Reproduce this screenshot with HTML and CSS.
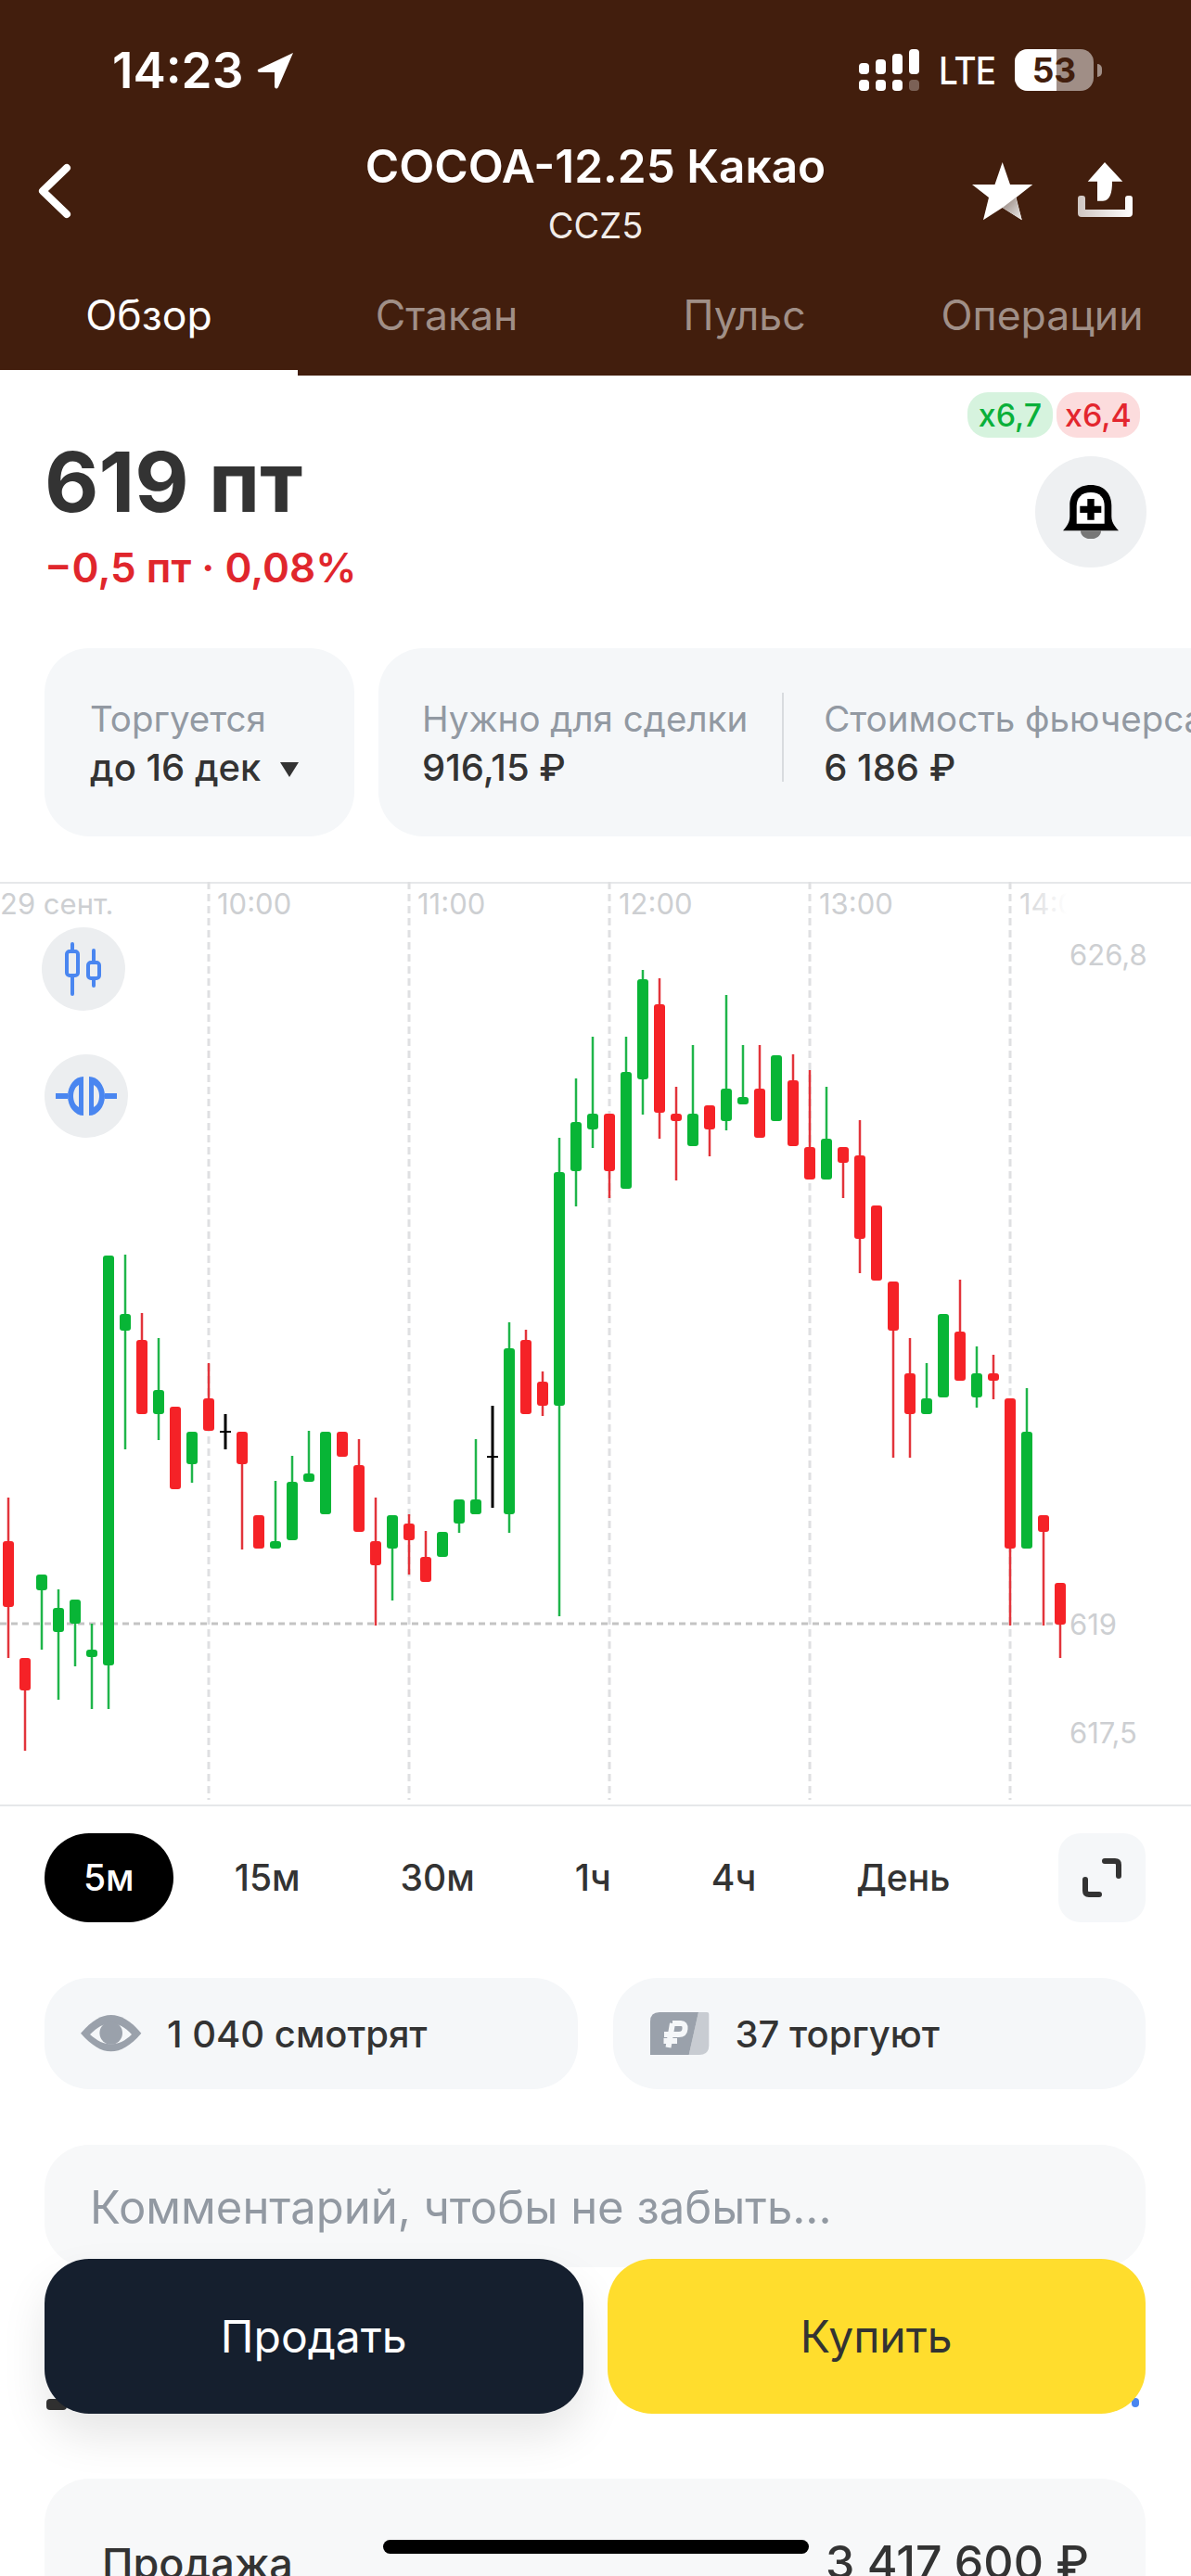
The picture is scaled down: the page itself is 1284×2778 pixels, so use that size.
FILE: index.html
```html
<!DOCTYPE html>
<html lang="ru">
<head>
  <meta charset="UTF-8">
  <title>COCOA-12.25 Какао</title>
  <link rel="stylesheet" href="styles.css">
</head>
<body>
<div class="screen">

  <header class="top">
    <div class="status">
      <div class="status-left">
        <span class="time">14:23</span>
        <svg class="arrow" viewBox="0 0 40 40"><path d="M39 1 L1 19 Q0 22 3 22 L19 22 L19 38 Q21 41 23 38 Z" fill="#fff"/></svg>
      </div>
      <div class="status-right">
        <svg class="signal" viewBox="0 0 66 45">
          <g fill="#fff">
            <rect x="0" y="15" width="11" height="12" rx="4"/>
            <rect x="18" y="11" width="11" height="16" rx="4"/>
            <rect x="36" y="5" width="11" height="22" rx="4"/>
            <rect x="54" y="0" width="11" height="27" rx="4"/>
            <rect x="0" y="33" width="11" height="12" rx="4"/>
            <rect x="18" y="33" width="11" height="12" rx="4"/>
            <rect x="36" y="33" width="11" height="12" rx="4"/>
            <rect x="54" y="33" width="11" height="12" rx="4" opacity=".3"/>
          </g>
        </svg>
        <span class="lte">LTE</span>
        <div class="battery"><div class="battery-fill"></div><span class="battery-num">53</span></div>
        <div class="battery-nub"></div>
      </div>
    </div>

    <div class="nav">
      <svg class="back" viewBox="0 0 40 64"><path d="M31 7 L5 32 L31 57" fill="none" stroke="#fff" stroke-width="8" stroke-linecap="round" stroke-linejoin="round"/></svg>
      <div class="nav-title">
        <div class="title">COCOA-12.25 Какао</div>
        <div class="ticker">CCZ5</div>
      </div>
      <div class="nav-icons">
        <svg class="star" viewBox="0 0 66 63">
          <defs>
            <linearGradient id="star-shade" x1="0" y1="0" x2="1" y2="1">
              <stop offset="0" stop-color="#8f7f78"/>
              <stop offset="1" stop-color="#f0eeed"/>
            </linearGradient>
          </defs>
          <path d="M32.700 0 L41 24 L65.300 24 L47.500 38 L53.700 62.300 L32.700 49 L12 62.300 L18 38 L0 24 L24.500 24 Z" fill="#fff"/>
          <path d="M32.700 49 L47 38 L53.700 62.300 Z" fill="url(#star-shade)"/>
        </svg>
        <svg class="share" viewBox="0 0 60 60">
          <defs>
            <linearGradient id="tray-shade" x1="0" y1="0" x2="1" y2="0">
              <stop offset="0" stop-color="#cfc6c2"/>
              <stop offset="1" stop-color="#fff"/>
            </linearGradient>
          </defs>
          <path d="M29 0 L48.300 20.700 L37 20.700 C37 33 35 41 27 41.700 L21 41.700 L21 20.700 L10.700 20.700 Z" fill="#fff"/>
          <path d="M3 36 H5 Q8 36 8 39 V51 H51 V39 Q51 36 54 36 H56 Q59 36 59 39 V55 Q59 59 55 59 H4 Q0 59 0 55 V39 Q0 36 3 36 Z" fill="url(#tray-shade)"/>
        </svg>
      </div>
    </div>

    <nav class="tabs">
      <div class="tab tab-active">Обзор</div>
      <div class="tab">Стакан</div>
      <div class="tab">Пульс</div>
      <div class="tab">Операции</div>
    </nav>
  </header>

  <section class="price">
    <div class="price-left">
      <div class="price-value">619 пт</div>
      <div class="price-change">−0,5 пт · 0,08%</div>
    </div>
    <div class="price-right">
      <div class="badges">
        <span class="badge badge-green">x6,7</span>
        <span class="badge badge-red">x6,4</span>
      </div>
      <div class="bell-btn">
        <svg class="bell" viewBox="0 0 60 58">
          <path d="M30 0 C16 0 7.300 9 7.300 22 V34 C7.300 41 3 46 0 49.300 H60 C57 46 52.300 41 52.300 34 V22 C52.300 9 44 0 30 0 Z" fill="#000"/>
          <path d="M30 8 C20 8 14.700 14 14.700 23 V41.700 H44.700 V23 C44.700 14 40 8 30 8 Z" fill="#fff"/>
          <path d="M26.300 15 H33.700 V22.700 H41.300 V30 H33.700 V37.700 H26.300 V30 H18.300 V22.700 H26.300 Z" fill="#000"/>
          <path d="M19 49.300 H41 C41 55 36 58.300 30 58.300 C24 58.300 19 55 19 49.300 Z" fill="#777"/>
        </svg>
      </div>
    </div>
  </section>

  <section class="info">
    <div class="info-card info-card-short">
      <div class="info-label">Торгуется</div>
      <div class="info-value">до 16 дек <span class="caret"></span></div>
    </div>
    <div class="info-card info-card-long">
      <div class="info-col">
        <div class="info-label">Нужно для сделки</div>
        <div class="info-value">916,15 ₽</div>
      </div>
      <div class="info-sep"></div>
      <div class="info-col">
        <div class="info-label">Стоимость фьючерса</div>
        <div class="info-value">6 186 ₽</div>
      </div>
    </div>
  </section>

  <section class="chart">
    <svg id="chart-svg" class="chart-svg" viewBox="0 951 1284 996" width="1284" height="996">
      <defs>
        <linearGradient id="fade" x1="1099" x2="1150" y1="0" y2="0" gradientUnits="userSpaceOnUse">
          <stop offset="0" stop-color="#cdcfd2"/>
          <stop offset="1" stop-color="#cdcfd2" stop-opacity="0"/>
        </linearGradient>
      </defs>
      <g class="chart-axis">
        <text x="0" y="986">29 сент.</text>
        <text x="234" y="986">10:00</text>
        <text x="450" y="986">11:00</text>
        <text x="667" y="986">12:00</text>
        <text x="883" y="986">13:00</text>
        <text x="1099" y="986" class="axis-fade">14:00</text>
        <text x="1153" y="1041">626,8</text>
        <text x="1153" y="1763">619</text>
        <text x="1153" y="1880">617,5</text>
      </g>
    </svg>
    <div class="chart-btn chart-btn-candles">
      <svg viewBox="0 0 44 58" class="chart-icon">
        <g fill="none" stroke="#4a86f0" stroke-width="4" stroke-linecap="round">
          <path d="M10 2 V10 M10 36 V56"/>
          <rect x="4" y="10" width="12" height="26" rx="3"/>
          <path d="M33 9 V22 M33 39 V47"/>
          <rect x="27" y="22" width="12" height="17" rx="3"/>
        </g>
      </svg>
    </div>
    <div class="chart-btn chart-btn-split">
      <svg viewBox="0 0 66 42" class="chart-icon-wide">
        <g fill="#4a86f0">
          <rect x="0" y="18" width="13" height="6"/>
          <rect x="53" y="18" width="13" height="6"/>
          <path d="M30 0 A17 21 0 0 0 30 42 Z M25 9 V33 C21 31 19 26 19 21 C19 16 21 11 25 9 Z" fill-rule="evenodd"/>
          <path d="M36 0 A17 21 0 0 1 36 42 Z M41 9 V33 C45 31 47 26 47 21 C47 16 45 11 41 9 Z" fill-rule="evenodd"/>
        </g>
      </svg>
    </div>
  </section>

  <section class="periods">
    <div class="period period-active">5м</div>
    <div class="period">15м</div>
    <div class="period">30м</div>
    <div class="period">1ч</div>
    <div class="period">4ч</div>
    <div class="period">День</div>
    <div class="expand">
      <svg viewBox="0 0 44 44" class="expand-icon">
        <path d="M25 4 H36 Q40 4 40 8 V20 M4 24 V36 Q4 40 8 40 H19" fill="none" stroke="#333" stroke-width="6" stroke-linecap="round"/>
      </svg>
    </div>
  </section>

  <section class="stats">
    <div class="stat">
      <svg class="stat-icon" viewBox="0 0 66 46">
        <g transform="translate(0 3)">
          <path d="M0 19.700 C12 6 22 0 32.700 0 C43 0 54 6 65.300 19.700 C54 33 43 39.300 32.700 39.300 C22 39.300 12 33 0 19.700 Z" fill="#9aa1ab"/>
          <path d="M10 21 C18 13 25 9 32.700 9 C40 9 48 13 55 21 C48 28 40 31.500 32.700 31.500 C25 31.500 18 28 10 21 Z" fill="#f5f7f9"/>
          <circle cx="32.700" cy="19.500" r="12.300" fill="#9aa1ab"/>
        </g>
      </svg>
      <span>1 040 смотрят</span>
    </div>
    <div class="stat">
      <svg class="stat-icon" viewBox="0 0 64 46">
        <path d="M52 0 H61 Q63.300 0 63.300 2 V36 Q63.300 46 53 46 H41.700 Z" fill="#c8ccd2"/>
        <path d="M10 0 H52 L41.700 46 H0 V10 Q0 0 10 0 Z" fill="#9aa1ab"/>
        <path d="M24 12 L19.500 38 M24 12 H33 Q38 12 37.500 18 Q37 24 31 24 H15 M14.500 31 H29" fill="none" stroke="#f5f7f9" stroke-width="6"/>
      </svg>
      <span>37 торгуют</span>
    </div>
  </section>

  <div class="comment">Комментарий, чтобы не забыть...</div>

  <section class="summary">
    <span class="summary-label">Продажа</span>
    <span class="summary-value">3 417 600 ₽</span>
  </section>

  <div class="trade">
    <div class="peek peek-left"></div>
    <div class="peek peek-right"></div>
    <div class="trade-btn trade-sell">Продать</div>
    <div class="trade-btn trade-buy">Купить</div>
  </div>

  <div class="home-bar"></div>
</div>

<script src="chart.js"></script>
</body>
</html>
```

FILE: styles.css
```css
* {
  box-sizing: border-box;
}
html, body {
  margin: 0;
  padding: 0;
}
body {
  font-family: Inter, "Noto Sans", sans-serif;
  color: #333;
  background: #fff;
}
.screen {
  position: relative;
  width: 1284px;
  height: 2778px;
  overflow: hidden;
}

/* header */
.top {
  height: 405px;
  background: #421e0d;
  color: #fff;
}
.status {
  height: 150px;
  padding: 53px 96px 0 121px;
  display: flex;
  justify-content: space-between;
  align-items: flex-start;
}
.status-left {
  display: flex;
  align-items: center;
  gap: 15px;
}
.time {
  font-size: 53px;
  line-height: 46px;
  font-weight: 600;
}
.arrow {
  width: 40px;
  height: 40px;
}
.status-right {
  display: flex;
  align-items: center;
  height: 45px;
}
.signal {
  width: 66px;
  height: 45px;
  margin-right: 20px;
}
.lte {
  font-size: 41px;
  font-weight: 500;
  letter-spacing: -1px;
  margin-right: 20px;
  width: 62px;
  transform: scaleX(.9);
  transform-origin: left;
}
.battery {
  position: relative;
  width: 85px;
  height: 45px;
  border-radius: 14px;
  overflow: hidden;
  background: #a08e86;
}
.battery-fill {
  width: 45px;
  height: 100%;
  background: #fff;
}
.battery-num {
  position: absolute;
  left: 0;
  right: 0;
  top: 0;
  text-align: center;
  font-size: 37px;
  line-height: 45px;
  font-weight: 700;
  color: #421e0d;
}
.battery-nub {
  width: 5px;
  height: 14px;
  margin-left: 4px;
  border-radius: 0 6px 6px 0;
  background: #a08e86;
}
.nav {
  position: relative;
  height: 128px;
  display: flex;
  justify-content: center;
}
.back {
  position: absolute;
  left: 41px;
  top: 24px;
  width: 40px;
  height: 64px;
}
.nav-title {
  text-align: center;
}
.title {
  font-size: 49.500px;
  line-height: 58px;
  font-weight: 600;
  white-space: nowrap;
}
.ticker {
  font-size: 38px;
  line-height: 44px;
  margin-top: 13px;
  color: #f1ece9;
}
.nav-icons {
  position: absolute;
  right: 62px;
  top: 25px;
  display: flex;
  align-items: flex-start;
  gap: 48px;
}
.star {
  width: 66px;
  height: 63px;
}
.share {
  width: 60px;
  height: 60px;
}
.tabs {
  display: flex;
  height: 127px;
}
.tab {
  flex: 1;
  padding-top: 37px;
  text-align: center;
  font-size: 44.500px;
  line-height: 50px;
  color: #a08f87;
}
.tab-active {
  color: #fff;
  border-bottom: 6px solid #fff;
}

/* price */
.price {
  display: flex;
  justify-content: space-between;
  height: 294px;
  padding: 18px 48px 0 48px;
}
.price-left {
  padding-top: 42px;
}
.price-value {
  font-size: 90px;
  line-height: 110px;
  font-weight: 700;
  color: #333;
}
.price-change {
  margin-top: 11px;
  font-size: 44px;
  line-height: 52px;
  font-weight: 600;
  color: #e0262c;
}
.price-right {
  display: flex;
  flex-direction: column;
  align-items: flex-end;
}
.badges {
  display: flex;
  gap: 4px;
  margin-right: 7px;
}
.badge {
  height: 49px;
  border-radius: 22px;
  font-size: 34px;
  line-height: 49px;
  font-weight: 500;
  text-align: center;
}
.badge-green {
  width: 92px;
  background: #d6f3de;
  color: #0ab03a;
}
.badge-red {
  width: 90px;
  background: #fcdcdd;
  color: #e3262e;
}
.bell-btn {
  width: 120px;
  height: 120px;
  margin-top: 20px;
  border-radius: 50%;
  background: #eef0f2;
  display: flex;
  align-items: center;
  justify-content: center;
}
.bell {
  width: 60px;
  height: 58px;
}

/* info cards */
.info {
  display: flex;
  gap: 26px;
  padding-left: 48px;
  height: 252px;
}
.info-card {
  height: 203px;
  border-radius: 48px;
  background: #f5f7f9;
  padding-top: 54px;
}
.info-card-short {
  width: 334px;
  padding-left: 49px;
}
.info-card-long {
  flex: 1;
  margin-right: -200px;
  display: flex;
  padding-left: 47px;
}
.info-col {
  white-space: nowrap;
}
.info-sep {
  width: 2px;
  height: 96px;
  margin: -6px 43px 0 37px;
  background: #d8dbdf;
}
.info-label {
  font-size: 38.500px;
  line-height: 44px;
  color: #9299a2;
  white-space: nowrap;
}
.info-value {
  margin-top: 9px;
  font-size: 40px;
  line-height: 44px;
  font-weight: 500;
  color: #333;
  white-space: nowrap;
}
.caret {
  display: inline-block;
  margin-left: 10px;
  vertical-align: 4px;
  border-left: 10px solid transparent;
  border-right: 10px solid transparent;
  border-top: 16px solid #333;
}

/* chart */
.chart {
  position: relative;
  height: 997px;
  border-top: 2px solid #e6e8ea;
  border-bottom: 2px solid #e6e8ea;
}
.chart-svg {
  display: block;
  margin-top: -2px;
}
.chart-axis text {
  font-family: Inter, sans-serif;
  font-size: 31px;
  fill: #cdcfd2;
}
.chart-axis .axis-fade {
  fill: url(#fade);
}
.grid-v {
  stroke: #dfe0e2;
  stroke-width: 3;
  stroke-dasharray: 8 5;
}
.grid-price {
  stroke: #c4c4c4;
  stroke-width: 3;
  stroke-dasharray: 7 5;
}
.chart-btn {
  position: absolute;
  width: 90px;
  height: 90px;
  border-radius: 50%;
  background: #eceef0;
  display: flex;
  align-items: center;
  justify-content: center;
}
.chart-btn-candles {
  left: 45px;
  top: 47px;
}
.chart-btn-split {
  left: 48px;
  top: 184px;
}
.chart-icon {
  width: 44px;
  height: 58px;
}
.chart-icon-wide {
  width: 66px;
  height: 42px;
}

/* periods */
.periods {
  display: flex;
  gap: 24px;
  padding: 29px 49px 0 48px;
  height: 185px;
}
.period {
  height: 96px;
  padding: 0 42px;
  border-radius: 48px;
  font-size: 39px;
  line-height: 96px;
  font-weight: 500;
  color: #333;
}
.period-active {
  background: #000;
  color: #fff;
}
.expand {
  margin-left: auto;
  width: 94px;
  height: 96px;
  border-radius: 24px;
  background: #f5f7f9;
  display: flex;
  align-items: center;
  justify-content: center;
}
.expand-icon {
  width: 44px;
  height: 44px;
}

/* stats */
.stats {
  display: flex;
  gap: 38px;
  padding: 0 49px 0 48px;
  height: 180px;
}
.stat {
  flex: 1;
  height: 120px;
  border-radius: 48px;
  background: #f5f7f9;
  display: flex;
  align-items: center;
  padding-left: 39px;
  gap: 27px;
  font-size: 40px;
  font-weight: 500;
}
.stat-icon {
  width: 66px;
  height: 46px;
}

/* comment + bottom card */
.comment {
  margin: 0 49px 0 48px;
  height: 132px;
  padding: 43px 49px 0;
  border-radius: 48px;
  background: #f7f8f9;
  font-size: 49px;
  line-height: 50px;
  color: #9299a2;
  white-space: nowrap;
}
.summary {
  display: flex;
  justify-content: space-between;
  align-items: baseline;
  margin: 228px 49px 0 48px;
  height: 200px;
  padding: 62px 61px 0 62px;
  border-radius: 48px;
  background: #f7f8f9;
  line-height: 56px;
  font-weight: 500;
}
.summary-label {
  font-size: 45px;
}
.summary-value {
  font-size: 50px;
}

/* floating buttons */
.trade {
  position: absolute;
  left: 48px;
  right: 49px;
  top: 2436px;
  display: flex;
  gap: 26px;
}
.trade-btn {
  position: relative;
  flex: 1;
  height: 167px;
  border-radius: 48px;
  font-size: 48px;
  line-height: 167px;
  text-align: center;
}
.trade-sell {
  background: #151f2e;
  color: #fff;
  box-shadow: 0 24px 48px rgba(0, 0, 0, .1);
}
.trade-buy {
  background: #ffdd2d;
  color: #333;
}
.peek {
  position: absolute;
  border-radius: 4px;
}
.peek-left {
  left: 2px;
  top: 151px;
  width: 22px;
  height: 12px;
  background: #333;
}
.peek-right {
  right: 7px;
  top: 150px;
  width: 8px;
  height: 10px;
  background: #4a86f0;
}
.home-bar {
  position: absolute;
  left: 413px;
  top: 2739px;
  width: 459px;
  height: 15px;
  border-radius: 8px;
  background: #000;
}
```

FILE: chart.js
```js
// candles: color, wick top, body top, body bottom, wick bottom (page y, 0 = no wick)
const candles = [
  ["r", 1615, 1662, 1733, 1788], ["r", 0, 1788, 1823, 1888], ["g", 0, 1698, 1715, 1779],
  ["g", 1714, 1734, 1760, 1833], ["g", 0, 1725, 1751, 1797], ["g", 1751, 1779, 1787, 1843],
  ["g", 0, 1354, 1796, 1843], ["g", 1353, 1417, 1435, 1563], ["r", 1416, 1445, 1525, 0],
  ["g", 1443, 1499, 1525, 1553], ["r", 0, 1517, 1606, 0], ["g", 0, 1544, 1579, 1599],
  ["r", 1470, 1508, 1543, 0], ["k", 1525, 1543, 1545, 1563], ["r", 0, 1544, 1579, 1671],
  ["r", 0, 1634, 1670, 0], ["g", 1597, 1662, 1670, 0], ["g", 1570, 1598, 1661, 0],
  ["g", 1543, 1589, 1598, 0], ["g", 0, 1544, 1633, 0], ["r", 0, 1544, 1571, 0],
  ["r", 1552, 1580, 1652, 0], ["r", 1615, 1662, 1688, 1753], ["g", 0, 1634, 1670, 1726],
  ["r", 1633, 1643, 1661, 1698], ["r", 1651, 1679, 1706, 0], ["g", 0, 1652, 1679, 0],
  ["g", 0, 1617, 1643, 1653], ["g", 1552, 1617, 1633, 0], ["k", 1516, 1570, 1572, 1626],
  ["g", 1426, 1454, 1633, 1653], ["r", 1434, 1445, 1525, 0], ["r", 1479, 1490, 1516, 1527],
  ["g", 1227, 1264, 1516, 1743], ["g", 1163, 1210, 1263, 1301], ["g", 1118, 1201, 1218, 1238],
  ["r", 0, 1201, 1263, 1292], ["g", 1118, 1156, 1282, 0], ["g", 1046, 1056, 1164, 1202],
  ["r", 1055, 1083, 1200, 1228], ["r", 1172, 1201, 1209, 1273], ["g", 1127, 1201, 1236, 0],
  ["r", 0, 1192, 1218, 1247], ["g", 1073, 1174, 1209, 1219], ["g", 1127, 1183, 1191, 0],
  ["r", 1127, 1174, 1227, 0], ["g", 0, 1138, 1209, 0], ["r", 1137, 1165, 1236, 0],
  ["r", 1154, 1237, 1272, 0], ["g", 1172, 1228, 1272, 0], ["r", 0, 1237, 1254, 1292],
  ["r", 1208, 1246, 1336, 1373], ["r", 0, 1300, 1381, 0], ["r", 0, 1382, 1435, 1572],
  ["r", 1443, 1481, 1525, 1572], ["g", 1470, 1508, 1525, 0], ["g", 0, 1417, 1507, 0],
  ["r", 1380, 1436, 1489, 0], ["g", 1452, 1481, 1507, 1518], ["r", 1461, 1481, 1489, 1509],
  ["r", 0, 1508, 1670, 1753], ["g", 1497, 1544, 1670, 0], ["r", 0, 1634, 1652, 1753],
  ["r", 0, 1707, 1752, 1788]
];
const bodyColors = { r: "#f52227", g: "#08b536", k: "#000" };
const wickColors = { r: "#e2343b", g: "#1fb54a", k: "#000" };

const svg = document.getElementById("chart-svg");
const axis = svg.querySelector(".chart-axis");
const NS = "http://www.w3.org/2000/svg";

function add(tag, attrs) {
  const el = document.createElementNS(NS, tag);
  Object.keys(attrs).forEach(k => el.setAttribute(k, attrs[k]));
  svg.insertBefore(el, axis);
  return el;
}

[225, 441, 657, 873, 1089].forEach(x => {
  add("line", { x1: x, x2: x, y1: 951, y2: 1941, class: "grid-v" });
});
add("line", { x1: 0, x2: 1142, y1: 1751, y2: 1751, class: "grid-price" });

candles.forEach((c, i) => {
  const x = 9 + i * 18;
  const [color, top, bodyTop, bodyBottom, bottom] = c;
  const y1 = top || bodyTop;
  const y2 = bottom || bodyBottom;
  add("line", { x1: x, x2: x, y1: y1, y2: y2, stroke: wickColors[color], "stroke-width": color === "k" ? 3 : 2.5 });
  add("rect", {
    x: x - 6,
    y: bodyTop,
    width: 12,
    height: bodyBottom - bodyTop,
    rx: color === "k" ? 0 : 3,
    fill: bodyColors[color]
  });
});
```
